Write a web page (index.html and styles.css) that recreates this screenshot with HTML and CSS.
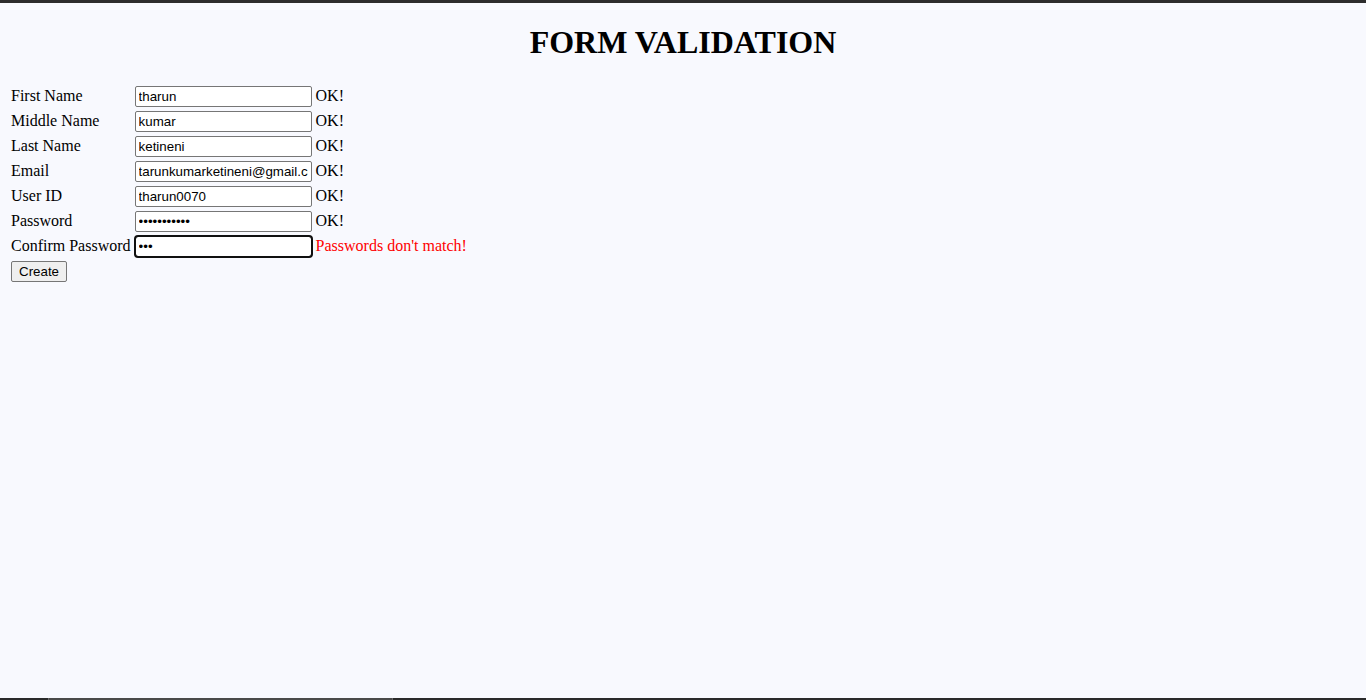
FILE: index.html
```html
<!DOCTYPE html>
<html>
<head>
<meta charset="utf-8">
<title>Form Validation</title>
<link rel="stylesheet" href="styles.css">
</head>
<body>
<h1 class="title">FORM VALIDATION</h1>
<form class="reg-form">
<table class="form-table">
<tr><td>First Name</td><td><input class="field" type="text" value="tharun"></td><td class="ok">OK!</td></tr>
<tr><td>Middle Name</td><td><input class="field" type="text" value="kumar"></td><td class="ok">OK!</td></tr>
<tr><td>Last Name</td><td><input class="field" type="text" value="ketineni"></td><td class="ok">OK!</td></tr>
<tr><td>Email</td><td><input class="field" type="text" value="tarunkumarketineni@gmail.com"></td><td class="ok">OK!</td></tr>
<tr><td>User ID</td><td><input class="field" type="text" value="tharun0070"></td><td class="ok">OK!</td></tr>
<tr><td>Password</td><td><input class="field" type="password" value="abcdefghijk"></td><td class="ok">OK!</td></tr>
<tr><td>Confirm Password</td><td><input class="field focused" type="password" value="abc"></td><td class="err">Passwords don't match!</td></tr>
<tr><td colspan="3"><button class="create-btn" type="button">Create</button></td></tr>
</table>
</form>
<div class="bottom-bar"><span class="bb-dark"></span><span class="bb-thumb"></span></div>
</body>
</html>
```

FILE: styles.css
```css
html {
  border-top: 3px solid #2d2d2d;
  background: #f8f9fe;
  min-height: 697px;
}
body {
  margin: 8px;
  font-family: "Liberation Serif", "Times New Roman", serif;
  font-size: 16px;
  color: #000;
}
.title {
  text-align: center;
  font-size: 32px;
  font-weight: bold;
  margin: 13.44px 0 21.44px;
}
.form-table {
  border-spacing: 2px;
}
.form-table td {
  padding: 1px;
  white-space: nowrap;
}
.field {
  font-family: "Liberation Sans", Arial, sans-serif;
  font-size: 13.33px;
  width: 177px;
  padding: 1px 3px;
  border: 1px solid #767676;
  border-radius: 2px;
  height: 21px;
  box-sizing: border-box;
  background: #fff;
  color: #000;
  margin: 0;
}
.focused {
  outline: 2px solid #101010;
  outline-offset: -1px;
  border-radius: 3px;
}
.ok { color: #000; }
.err { color: #ff0000; }
.create-btn {
  font-family: "Liberation Sans", Arial, sans-serif;
  font-size: 13.33px;
  padding: 1px 7px;
  border: 1px solid #767676;
  border-radius: 2px;
  background: #efefef;
  color: #000;
  height: 21px;
}
.bottom-bar {
  position: fixed;
  left: 0;
  right: 0;
  bottom: 0;
  height: 2px;
  background: #2a2a2a;
  display: flex;
}
.bb-dark { width: 48px; }
.bb-thumb {
  width: 343px;
  background: #4a4a4a;
  border-left: 1px solid #6a6a6a;
  border-right: 1px solid #6a6a6a;
}
```
